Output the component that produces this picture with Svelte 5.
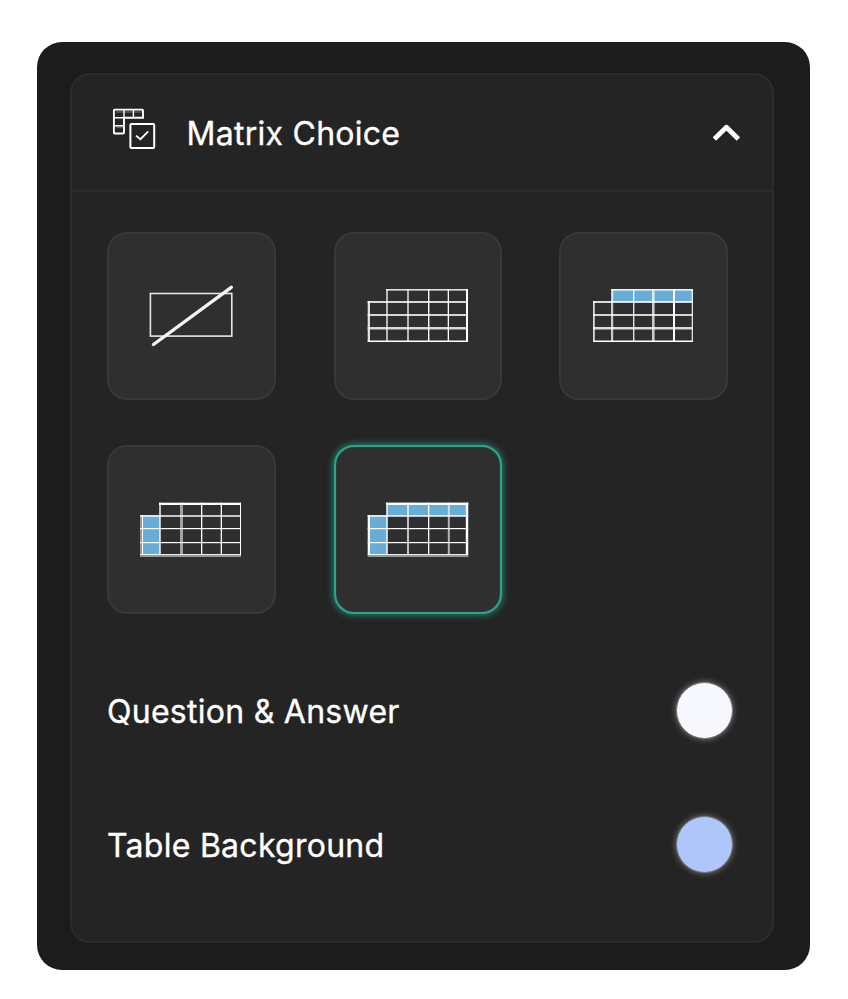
<script>
  // Rules are [start, thickness, opacity], measured inside the tile.
  const rowsA = [[55, 1.6, 0.85], [67, 2, 0.82], [80, 2, 0.8], [93, 2.5, 0.82], [106.5, 1.5, 1]];
  const rowsB = [[55.7, 2.3, 1], [68, 2, 0.72], [81, 1.2, 1], [95, 1.2, 1], [107, 1, 0.9], [108, 2, 0.5]];

  const tiles = [
    { label: 'None', none: true },
    {
      label: 'Plain grid',
      cols: [[31.7, 2.3, 0.85], [50, 2, 0.65], [71, 2, 0.65], [92, 1.4, 1], [111.7, 1.3, 1], [130, 2, 1]],
      rows: rowsA
    },
    {
      label: 'Header row',
      cols: [[32, 1.8, 0.8], [50, 2.2, 0.75], [72, 1.4, 0.85], [91, 2.6, 0.75], [112, 2, 1], [130.7, 1.3, 0.85]],
      rows: rowsA,
      top: true
    },
    {
      label: 'Header column',
      cols: [[31, 2, 0.5], [33, 1, 1], [50, 2, 0.7], [71, 3, 0.55], [92, 1.3, 1], [111.7, 1.3, 1], [131, 1, 1]],
      rows: rowsB,
      side: true
    },
    {
      label: 'Header row and column',
      cols: [[31.7, 2.3, 1], [50, 2, 0.72], [71, 2, 0.7], [92, 1.3, 1], [111.8, 2, 0.65], [129.8, 2.4, 1]],
      rows: rowsB,
      top: true,
      side: true
    }
  ];

  const colors = [
    { name: 'Question & Answer', value: '#f6f8fe' },
    { name: 'Table Background', value: '#afc6fa' }
  ];

  let selected = $state(4);

  const gridTop = (t) => t.rows[0][0];
  const gridEnd = (t) => {
    const last = t.rows[t.rows.length - 1];
    return last[0] + last[1];
  };
  const gridRight = (t) => {
    const last = t.cols[t.cols.length - 1];
    return last[0] + last[1];
  };
</script>

<main class="panel">
  <section class="card">
    <header>
      <svg class="logo" width="44" height="42" viewBox="0 0 44 42" fill="none" stroke="#fff">
        <path d="M2.7 1.6H30.3Q31 1.6 31 2.4V9.8H12V24.7Q12 25.5 11.2 25.5H2.9Q1.9 25.5 1.9 24.5V2.4Q1.9 1.6 2.7 1.6Z" stroke-width="1.9" />
        <path d="M1.9 9.8H12M12 1V10M21.4 1V10M1.9 17.8H12" stroke-width="1.4" />
        <path d="M4 4H30M4 19.5H11" stroke-width="1.6" opacity=".25" />
        <rect x="18.4" y="16.1" width="23.8" height="23.8" rx="1" stroke-width="2" />
        <path d="M24 27.6L28.4 31.2L36.3 23.4" stroke-width="1.8" />
      </svg>
      <h1>Matrix Choice</h1>
      <svg class="chevron" width="30" height="20" viewBox="0 0 30 20" fill="none">
        <path d="M3.4 15.9L15.4 4.3L27.4 15.9" stroke="#fff" stroke-width="4.8" stroke-linejoin="round" />
      </svg>
    </header>

    <div class="tiles">
      {#each tiles as t, i}
        <button class="tile" class:active={selected === i} aria-label={t.label} onclick={() => (selected = i)}>
          <svg width="164" height="164" viewBox="0 0 164 164">
            {#if t.none}
              <rect x="41.4" y="59.5" width="81.4" height="42.6" fill="none" stroke="#fff" stroke-width="1.6" opacity=".88" />
              <path d="M44.5 110.5L122.3 53.3" stroke="#f4f4f4" stroke-width="3.4" stroke-linecap="round" />
            {:else}
              {#if t.top}
                <rect x="51" y={gridTop(t)} width={gridRight(t) - 51} height={t.rows[1][0] - gridTop(t) + 1} fill="#67add6" />
              {/if}
              {#if t.side}
                <rect x="33" y={t.rows[1][0]} width="18" height={108 - t.rows[1][0]} fill="#67add6" />
              {/if}
              <g fill="#fff">
                {#each t.cols as [x, w, o]}
                  {@const y = x < 49 ? t.rows[1][0] : gridTop(t)}
                  {@const end = t.side ? 108 : gridEnd(t)}
                  <rect {x} {y} width={w} height={end - y} opacity={o} />
                {/each}
                {#each t.rows as [y, h, o], r}
                  {@const x = r === 0 ? 50 : t.cols[0][0]}
                  <rect {x} {y} width={gridRight(t) - x} height={h} opacity={o} />
                {/each}
              </g>
            {/if}
          </svg>
        </button>
      {/each}
    </div>

    <div class="colors">
      {#each colors as c}
        <div class="row">
          <span>{c.name}</span>
          <i class="swatch" style="background-color: {c.value}"></i>
        </div>
      {/each}
    </div>
  </section>
</main>

<style>
  :global(body) {
    background: #fff;
  }
  :global(#app) {
    display: flow-root;
  }
  .panel {
    box-sizing: border-box;
    width: 773px;
    height: 928px;
    margin: 42px 0 0 37px;
    padding: 31px 36px 26px 33px;
    border-radius: 25px;
    background: #1c1c1c;
    color: #fff;
    font-family: Inter, sans-serif;
    letter-spacing: 0.27px;
    -webkit-text-stroke: 0.35px #fff;
  }
  .card {
    box-sizing: border-box;
    height: 870px;
    border: 2px solid #2b2b2b;
    border-radius: 20px;
    background: #242424;
  }
  header {
    box-sizing: border-box;
    height: 117px;
    padding: 0 31px 0 40px;
    border-bottom: 2px solid #2b2b2b;
    display: flex;
    align-items: center;
  }
  .logo {
    margin-top: -7px;
  }
  h1 {
    margin: 3px 0 0 30.5px;
    font-size: 32px;
    line-height: 40px;
    font-weight: 400;
    white-space: nowrap;
  }
  .chevron {
    margin: 0 0 0 auto;
  }
  .tiles {
    display: grid;
    grid-template: 168px 169px / repeat(3, 169px);
    gap: 45px 57px;
    padding: 40px 0 0 35px;
  }
  .tile {
    box-sizing: border-box;
    padding: 0;
    border: 2px solid #383838;
    border-radius: 20px;
    background: #2f2f2f;
    display: flex;
    overflow: hidden;
  }
  .tile:nth-child(3n + 2) {
    margin-left: 1px;
  }
  .tile svg {
    flex: none;
  }
  .tile.active {
    border-color: #26a78b;
    box-shadow:
      inset 0 0 1px #26a78b,
      0 0 7px 1px rgba(38, 167, 139, 0.7);
  }
  .colors {
    display: flex;
    flex-direction: column;
    gap: 78px;
    padding: 69px 40px 0 35px;
  }
  .row {
    height: 56px;
    display: flex;
    align-items: center;
    justify-content: space-between;
    font-size: 32px;
    line-height: 40px;
    white-space: nowrap;
  }
  .row span {
    margin-top: 2px;
  }
  .swatch {
    box-sizing: border-box;
    width: 57px;
    height: 57px;
    margin: -2px -1px 0 0;
    border: 1px solid #777;
    border-radius: 50%;
    box-shadow: 0 0 6px rgba(255, 255, 255, 0.4);
  }
</style>
